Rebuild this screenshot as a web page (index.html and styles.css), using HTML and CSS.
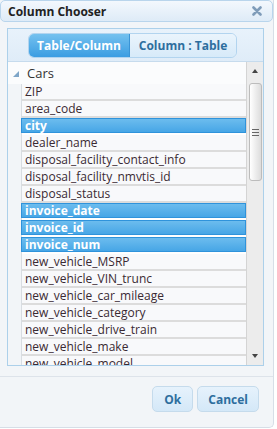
FILE: index.html
```html
<!DOCTYPE html>
<html lang="en">
<head>
  <meta charset="UTF-8">
  <title>Column Chooser</title>
  <link rel="stylesheet" href="styles.css">
</head>
<body>
  <div class="dialog">
    <div class="titlebar">
      <span class="title">Column Chooser</span>
      <svg class="close" width="10" height="10" viewBox="0 0 10 10">
        <path d="M1.5 1.5 L8.5 8.5 M8.5 1.5 L1.5 8.5" stroke="#7f9cb9" stroke-width="2.6" stroke-linecap="round"/>
      </svg>
    </div>
    <div class="panel">
      <div class="toolbar">
        <div class="toggle">
          <button class="toggle-btn active">Table/Column</button>
          <button class="toggle-btn">Column : Table</button>
        </div>
      </div>
      <div class="list">
        <div class="rows">
          <div class="tree-head"><span class="caret"></span>Cars</div>
          <div class="tree-body">
            <div class="gutter"></div>
            <ul class="cols">
              <li>ZIP</li>
              <li>area_code</li>
              <li class="sel">city</li>
              <li>dealer_name</li>
              <li>disposal_facility_contact_info</li>
              <li>disposal_facility_nmvtis_id</li>
              <li>disposal_status</li>
              <li class="sel">invoice_date</li>
              <li class="sel">invoice_id</li>
              <li class="sel">invoice_num</li>
              <li>new_vehicle_MSRP</li>
              <li>new_vehicle_VIN_trunc</li>
              <li>new_vehicle_car_mileage</li>
              <li>new_vehicle_category</li>
              <li>new_vehicle_drive_train</li>
              <li>new_vehicle_make</li>
              <li>new_vehicle_model</li>
            </ul>
          </div>
        </div>
        <div class="scrollbar">
          <span class="arrow up"></span>
          <div class="thumb"><span class="grip"></span></div>
          <span class="arrow down"></span>
        </div>
      </div>
    </div>
    <div class="footer">
      <button class="btn">Ok</button>
      <button class="btn">Cancel</button>
    </div>
  </div>
</body>
</html>
```
FILE: styles.css
```css
body {
  margin: 0;
  background: #fff;
  font-family: "Open Sans", "Liberation Sans", sans-serif;
}
.dialog {
  width: 273px;
  height: 427px;
  border: 1px solid #d6dee7;
  border-top: none;
  border-left: none;
  border-radius: 0 0 5px 0;
  background: #f2f5f8;
  display: flex;
  flex-direction: column;
}
.titlebar {
  height: 20px;
  border: 1px solid #b9d5ec;
  border-radius: 5px;
  background: linear-gradient(to bottom, #f3f8fd, #deebf7);
  display: flex;
  align-items: center;
  justify-content: space-between;
  padding: 0 10px 0 7px;
}
.title {
  font-size: 12px;
  font-weight: bold;
  color: #222;
}
.close {
  display: block;
}
.panel {
  margin: 6px 0 0 7px;
  width: 255px;
  height: 336px;
  border: 1px solid #acd0ea;
  display: flex;
  flex-direction: column;
}
.toolbar {
  height: 32px;
  background: linear-gradient(to bottom, #e8f2fb, #dfecf8);
  padding: 4px 0 0 20px;
  box-sizing: border-box;
}
.toggle {
  display: flex;
  width: 209px;
  height: 25px;
  border-radius: 6px;
  border: 1px solid #b2d4ef;
  box-sizing: border-box;
  overflow: hidden;
}
.toggle-btn {
  border: none;
  margin: 0;
  font-family: inherit;
  font-size: 12px;
  font-weight: bold;
  color: #2e6e9e;
  background: linear-gradient(to bottom, #eaf4fc, #d7eaf9);
  flex: 1;
  padding: 0;
}
.toggle-btn.active {
  flex: 0 0 101px;
  color: #fff;
  background: linear-gradient(to bottom, #74c1ef, #3b9de2);
  border-right: 1px solid #3a94d6;
}
.list {
  flex: 1;
  display: flex;
  overflow: hidden;
  background: #fff;
  border-top: 1px solid #c6dbed;
}
.rows {
  flex: 1;
  overflow: hidden;
}
.tree-head {
  height: 22px;
  display: flex;
  align-items: center;
  font-size: 13px;
  color: #333;
  background: #fbfcfd;
}
.caret {
  width: 0;
  height: 0;
  border-left: 6px solid transparent;
  border-bottom: 6px solid #7fa6c8;
  margin: 2px 8px 0 5px;
}
.tree-body {
  display: flex;
}
.gutter {
  width: 13px;
  background: #f2f5f8;
  border-right: 1px solid #d8dde2;
}
.cols {
  list-style: none;
  margin: 0;
  padding: 0;
  flex: 1;
}
.cols li {
  height: 15px;
  line-height: 15px;
  font-size: 12px;
  color: #3a2a33;
  background: #f8f9fb;
  border-bottom: 2px solid #dcdcdc;
  padding-left: 3px;
  white-space: nowrap;
}
.cols li.sel {
  margin-left: -1px;
  padding-left: 3px;
  height: 13px;
  line-height: 13px;
  border: 1px solid #2f93db;
  margin-bottom: 2px;
  background: linear-gradient(to bottom, #6cbcee, #47a6e6);
  color: #fff;
  font-weight: bold;
}
.scrollbar {
  width: 16px;
  background: #ececec;
  border-left: 1px solid #d4d4d4;
  display: flex;
  flex-direction: column;
  align-items: center;
}
.arrow {
  width: 0;
  height: 0;
  border-left: 3px solid transparent;
  border-right: 3px solid transparent;
}
.arrow.up {
  border-bottom: 4px solid #444;
  margin: 7px 0 10px;
}
.arrow.down {
  border-top: 4px solid #444;
  margin: auto 0 7px;
}
.thumb {
  width: 11px;
  height: 96px;
  border: 1px solid #bcbcbc;
  border-radius: 3px;
  background: linear-gradient(to right, #ffffff, #dcdcdc);
  display: flex;
  align-items: center;
  justify-content: center;
}
.grip {
  width: 7px;
  height: 5px;
  border-top: 1px solid #666;
  border-bottom: 1px solid #666;
  position: relative;
}
.grip::after {
  content: "";
  position: absolute;
  left: 0;
  right: 0;
  top: 2px;
  border-top: 1px solid #666;
}
.footer {
  margin-top: 10px;
  border-top: 1px solid #dde3ea;
  display: flex;
  justify-content: flex-end;
  gap: 4px;
  padding: 9px 14px 0 0;
}
.btn {
  height: 26px;
  border: 1px solid #c5dbec;
  border-radius: 5px;
  background: linear-gradient(to bottom, #e6f2fc, #d4e8f8);
  color: #2e6e9e;
  font-family: inherit;
  font-size: 12px;
  font-weight: bold;
  padding: 0 10px;
}
.btn:first-child {
  width: 41px;
}
```
